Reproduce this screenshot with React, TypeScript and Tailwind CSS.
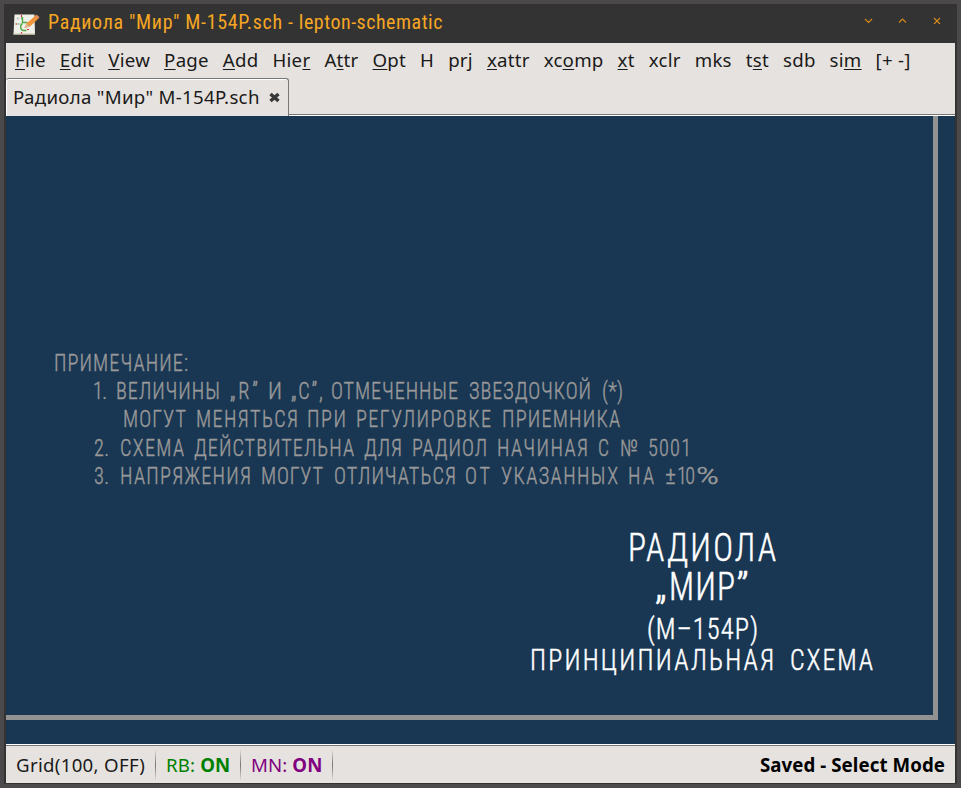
import React from 'react';

type Mnemonic = [before: string, key: string, after: string];
type Word = [text: string, x: number, width: number];

const menus: Mnemonic[] = [
  ['', 'F', 'ile'], ['', 'E', 'dit'], ['', 'V', 'iew'], ['', 'P', 'age'], ['', 'A', 'dd'],
  ['Hie', 'r', ''], ['A', 't', 'tr'], ['', 'O', 'pt'], ['H', '', ''], ['prj', '', ''],
  ['', 'x', 'attr'], ['xc', 'o', 'mp'], ['', 'x', 't'], ['xclr', '', ''], ['mks', '', ''],
  ['t', 's', 't'], ['sdb', '', ''], ['si', 'm', ''], ['[+ -]', '', ''],
];

const notes: { y: number; words: Word[] }[] = [
  { y: 371, words: [['ПРИМЕЧАНИЕ:', 54, 134]] },
  { y: 399, words: [['1.', 93, 14], ['ВЕЛИЧИНЫ', 116, 104], ['„R”', 230, 28], ['И', 268, 14], ['„С”,', 291, 32], ['ОТМЕЧЕННЫЕ', 331, 127], ['ЗВЕЗДОЧКОЙ', 469, 122], ['(*)', 602, 21]] },
  { y: 427, words: [['МОГУТ', 123, 63], ['МЕНЯТЬСЯ', 196, 102], ['ПРИ', 307, 39], ['РЕГУЛИРОВКЕ', 356, 135], ['ПРИЕМНИКА', 502, 118]] },
  { y: 456, words: [['2.', 94, 15], ['СХЕМА', 120, 64], ['ДЕЙСТВИТЕЛЬНА', 194, 160], ['ДЛЯ', 364, 38], ['РАДИОЛ', 412, 75], ['НАЧИНАЯ', 497, 91], ['С', 598, 11], ['№', 620, 18], ['5001', 648, 43]] },
  { y: 484, words: [['3.', 94, 15], ['НАПРЯЖЕНИЯ', 120, 131], ['МОГУТ', 261, 62], ['ОТЛИЧАТЬСЯ', 334, 122], ['ОТ', 465, 25], ['УКАЗАННЫХ', 501, 117], ['НА', 628, 26], ['±', 665, 11], ['10', 677, 18], ['%', 696, 23]] },
];

const titles: { y: number; size: number; words: Word[] }[] = [
  { y: 561, size: 38, words: [['РАДИОЛА', 628, 148]] },
  { y: 600, size: 38, words: [['„', 655, 12], ['МИР', 669, 66], ['”', 736, 13]] },
  { y: 638.5, size: 30, words: [['(М–154Р)', 647, 111]] },
  { y: 669.5, size: 29.5, words: [['ПРИНЦИПИАЛЬНАЯ', 530, 244], ['СХЕМА', 790, 83]] },
];

// Lettering is drawn narrow, with open gaps between the characters.
const NARROW = 0.88;

function Line({ y, size, words }: { y: number; size: number; words: Word[] }) {
  return (
    <>
      {words.map(([text, x, width]) => (
        <text
          key={x}
          transform={`translate(${x - 6} ${y - 116}) scale(${NARROW} 1)`}
          fontSize={size}
          textLength={width / NARROW}
          lengthAdjust={text.length > 1 ? 'spacing' : 'spacingAndGlyphs'}
        >
          {text}
        </text>
      ))}
    </>
  );
}

function AppIcon() {
  return (
    <svg className="block h-6 w-7" viewBox="0 0 28 24">
      <path d="M2.500 2.500h20l.5 20H1.500z" fill="#f0f0ea" />
      <path d="M1.500 21.500h21.500v1H1.500z" fill="#c9c2a2" />
      <path d="M4.500 5.500h3v2h-3z" fill="#c8c8c8" />
      <path d="M3.500 12h6M9.500 3.500v4" stroke="#8bb98b" strokeWidth="1" />
      <path d="M9.500 3v2M3.500 12h1.500M9.500 20v1.500M15 17.500h2" stroke="#d33" strokeWidth="1.2" />
      <path d="M10.500 5v6M10.500 10.500h5M10.500 11.500c-3 2-2 7 1 7h3" fill="none" stroke="#4fa848" strokeWidth="1.4" />
      <path d="m12.500 16 2-4.500L23.500 3.500l3 3-8.500 8z" fill="#ef943b" />
      <path d="m23 4 1.500-1.500 3 2.500-1.500 2z" fill="#dd8a58" />
      <path d="m12.500 16 2-4.500 3.500 3z" fill="#d8b890" />
    </svg>
  );
}

function Separator() {
  return <div className="h-8 w-px bg-linear-to-b from-[#e6e2df] via-[#777370] to-[#e6e2df]" />;
}

export default function App() {
  return (
    <div className="h-[788px] w-[961px] overflow-hidden bg-[#4b4949] pt-1 pl-1 text-[#1a1a1a]" style={{ fontFamily: '"Noto Sans", sans-serif' }}>
      <div className="flex h-[780px] w-[953px] flex-col bg-[#333] pr-[2px] pb-px pl-[2px]">
        <header className="flex h-[39px] shrink-0 items-center pl-[6px] text-[#f5a623]">
          <AppIcon />
          <div className="ml-2 w-[396px] pb-1 text-[20px] leading-none tracking-[0.660px] whitespace-nowrap [font-stretch:75%]" style={{ fontFamily: '"Roboto Condensed", Roboto, sans-serif' }}>
            Радиола "Мир" М-154Р.sch - <span className="tracking-[0.5px]">lepton-schematic</span>
          </div>
          <svg className="mr-1 mb-[9px] ml-auto h-[10px] w-[90px]" viewBox="0 0 90 10" fill="none" stroke="#d88c18" strokeWidth="1.100">
            <path d="m4 5 3.500 3.500L11 5M38 8.500 41.500 5 45 8.500M73 4l6 6M79 4l-6 6" />
          </svg>
        </header>
        <nav className="flex h-[35px] shrink-0 items-center gap-[14px] bg-[#e6e2df] pl-[9px] text-[18.667px] leading-none tracking-[0.250px] whitespace-nowrap">
          {menus.map(([before, key, after]) => (
            <span key={before + key + after}>
              {before}
              {key && <span className="underline decoration-1 underline-offset-2">{key}</span>}
              {after}
            </span>
          ))}
        </nav>
        <div className="flex h-[38px] shrink-0 bg-[#e6e2df]">
          <div className="flex w-[283px] items-center rounded-t-[3px] border-t border-r border-[#777] pl-[7px] text-[18.667px] leading-none tracking-[0.3px] whitespace-nowrap shadow-[inset_1px_1px_0_white]">
            <span>Радиола "Мир" М-154Р.sch</span>
            <svg className="mb-px ml-[9px] h-[11px] w-[11px]" viewBox="0 0 11 11" stroke="#383838" strokeWidth="3.500">
              <path d="m1.500 2 8 7M9.500 2l-8 7" />
            </svg>
          </div>
          <div className="mb-px flex-1 border-b border-[#777] shadow-[0_1px_0_white]" />
        </div>
        <main className="h-[628px] shrink-0 bg-[#193753]">
          <svg className="block h-full w-full [font-stretch:75%]" viewBox="0 0 949 628" style={{ fontFamily: '"Roboto Condensed", Roboto, sans-serif' }}>
            <path d="M929.500 0v601.500H0" fill="none" stroke="#929292" strokeWidth="5" />
            <g fill="#999" stroke="#999" strokeWidth="0.400" strokeLinejoin="round" fontWeight="300">
              {notes.map((n) => <Line key={n.y} y={n.y} size={23} words={n.words} />)}
            </g>
            <g fill="#fff" stroke="#fff" strokeWidth="0.500" strokeLinejoin="round" fontWeight="300">
              {titles.map((t) => <Line key={t.y} {...t} />)}
            </g>
          </svg>
        </main>
        <footer className="flex h-[39px] shrink-0 items-center border-t border-white bg-[#e6e2df] pt-[2px] pr-[10px] pl-[10px] text-[18.667px] leading-none whitespace-nowrap shadow-[inset_0_1px_0_#777]">
          <div className="w-[139px] tracking-[0.3px]">Grid(100, OFF)</div>
          <Separator />
          <div className="w-[84px] pl-[10px] tracking-[0.150px] text-[#008000]">RB: <b>ON</b></div>
          <Separator />
          <div className="w-[91px] pl-[10px] tracking-[0.100px] text-[#800080]">MN: <b>ON</b></div>
          <Separator />
          <b className="ml-auto tracking-[0.080px] text-black">Saved - Select Mode</b>
        </footer>
      </div>
    </div>
  );
}
